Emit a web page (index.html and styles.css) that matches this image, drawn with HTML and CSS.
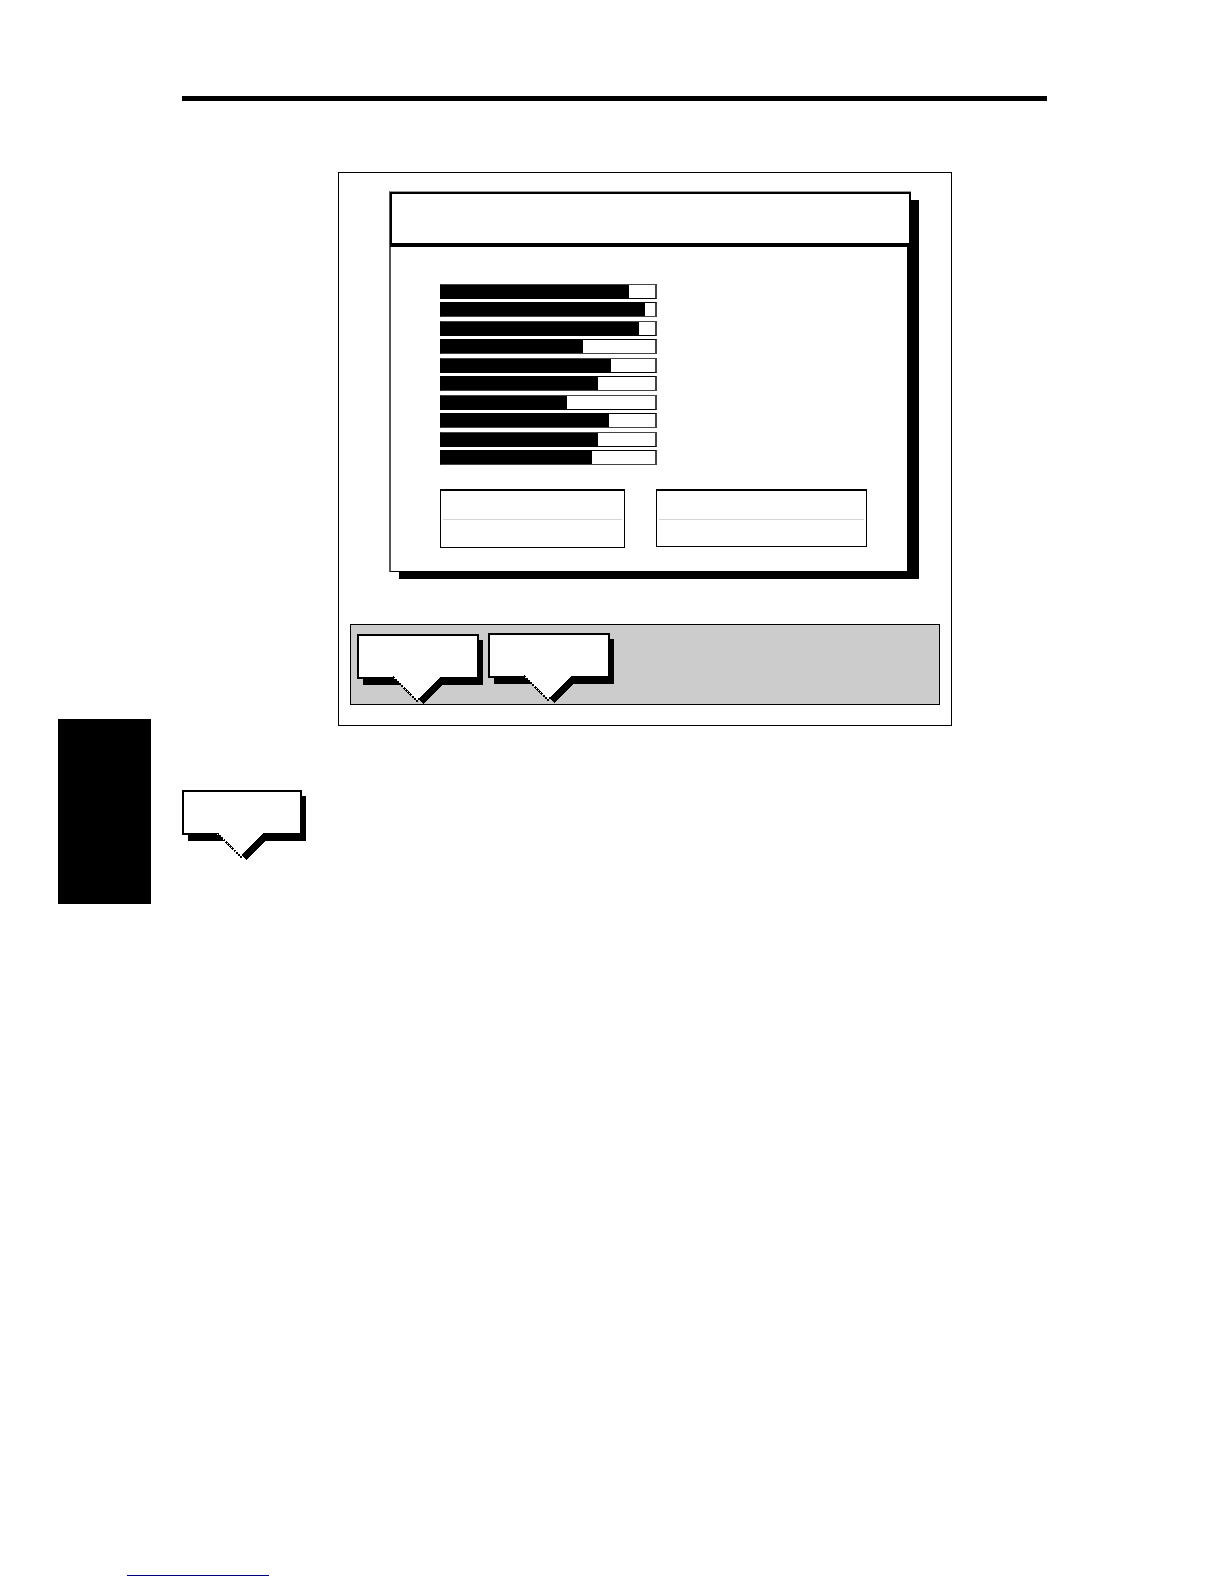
FILE: index.html
```html
<!DOCTYPE html>
<html lang="en">
<head>
  <meta charset="UTF-8">
  <meta name="viewport" content="width=device-width, initial-scale=1.0">
  <title>Manual page</title>
  <link rel="stylesheet" href="styles.css">
</head>
<body>
  <!-- callout shape, shared by the toolbar and the body text -->
  <svg class="defs" aria-hidden="true">
    <symbol id="callout" viewBox="0 0 126 71" preserveAspectRatio="none">
      <path d="M6 6H126V51H85L66 70L60 64L42 51H6Z" fill="#000"/>
      <path d="M0 0H122V45H0Z" fill="#000"/>
      <path d="M36 43L60 67L42 67L34 51Z" fill="var(--behind)"/>
      <path d="M6 45H38L44 51H6Z" fill="#000"/>
      <path d="M2 2H120V43H83L59 67L35 43H2Z" fill="#fff"/>
      <path d="M36 43L60 67L62 65" fill="none" stroke="#000" stroke-width="2" stroke-dasharray="2 1"/>
    </symbol>
  </svg>

  <div class="page">
    <div class="side-tab"></div>
    <main class="content">
      <hr class="rule">
      <section class="figure">
        <div class="window">
          <div class="window-header"></div>
          <div class="window-body">
            <div class="bars">
              <div class="bar"><div class="fill" style="width: 87.9%"></div></div>
              <div class="bar"><div class="fill" style="width: 95.1%"></div></div>
              <div class="bar"><div class="fill" style="width: 92.3%"></div></div>
              <div class="bar"><div class="fill" style="width: 66.2%"></div></div>
              <div class="bar"><div class="fill" style="width: 79.3%"></div></div>
              <div class="bar"><div class="fill" style="width: 73.2%"></div></div>
              <div class="bar"><div class="fill" style="width: 59.1%"></div></div>
              <div class="bar"><div class="fill" style="width: 78.4%"></div></div>
              <div class="bar"><div class="fill" style="width: 73.2%"></div></div>
              <div class="bar"><div class="fill" style="width: 70.4%"></div></div>
            </div>
            <div class="boxes">
              <div class="box"><div class="box-row"></div></div>
              <div class="box box-wide"><div class="box-row"></div></div>
            </div>
          </div>
        </div>
        <div class="toolbar">
          <svg class="callout" aria-hidden="true"><use href="#callout"/></svg>
          <svg class="callout callout-raised" aria-hidden="true"><use href="#callout"/></svg>
        </div>
      </section>
      <svg class="callout callout-note" aria-hidden="true"><use href="#callout"/></svg>
    </main>
    <footer class="footer">
      <a class="footer-link" href="#"></a>
    </footer>
  </div>
</body>
</html>
```

FILE: styles.css
```css
* {
  box-sizing: border-box;
}
body {
  margin: 0;
  background-color: #fff;
  color: #000;
  font-family: "Liberation Sans", Arial, sans-serif;
}
.defs {
  display: none;
}
.page {
  display: grid;
  grid-template-columns: 93px minmax(0, 1fr);
  grid-template-rows: 1fr auto;
  column-gap: 31px;
  min-height: 100vh;
  padding: 0 177px 8px 58px;
}
.side-tab {
  height: 185px;
  margin-top: 719px;
  background-color: #000;
}
.content {
  padding-top: 96px;
}
.rule {
  height: 5px;
  margin: 0 0 71px;
  border: none;
  background-color: #000;
}
.figure {
  max-width: 614px;
  margin-left: 156px;
  padding: 18px 11px 20px;
  border: 1px solid #000;
}
/* window with a hard drop shadow */
.window {
  margin: 0 29px 52px 39px;
  border-top: 1px solid #999;
  border-left: 1px solid #555;
  box-shadow: 9px 8px 0 -1px #000;
}
.window-header {
  height: 55px;
  border: 2px solid #000;
  border-bottom-width: 4px;
}
.window-body {
  padding: 37px 40px 23px 49px;
  border-left: 1px solid #555;
  border-right: 4px solid #000;
  border-bottom: 1px solid #000;
  background-color: #fff;
}
.bars {
  display: flex;
  flex-direction: column;
  gap: 3px;
  max-width: 217px;
}
.bar {
  height: 15px;
  border: 1px solid #000;
  border-right: 2px solid #444;
}
.bar:nth-child(odd) {
  border-top-color: #444;
}
.bar:nth-child(even) {
  margin-bottom: 1px;
  border-bottom-color: #444;
}
.fill {
  height: 100%;
  background-color: #000;
}
.boxes {
  display: flex;
  gap: 31px;
  margin-top: 23px;
}
.box {
  flex: 185 1 0;
  height: 59px;
  padding: 0 2px;
  border: 1px solid #000;
  border-top-width: 2px;
}
.box-wide {
  flex-grow: 211;
  height: 58px;
}
.box-row {
  height: 29px;
  border-bottom: 1px solid #d5d5d5;
}
.toolbar {
  --behind: #ccc;
  display: flex;
  gap: 5px;
  height: 81px;
  padding: 9px 6px;
  border: 1px solid #000;
  background-color: #ccc;
}
.callout {
  display: block;
  flex: none;
  width: 126px;
  height: 71px;
  shape-rendering: crispEdges;
}
.callout-raised {
  margin-top: -1px;
}
.callout-note {
  --behind: #fff;
  width: 124px;
  margin-top: 64px;
}
.footer {
  grid-column: 1 / -1;
  padding-left: 69px;
}
.footer-link {
  display: block;
  max-width: 142px;
  border-bottom: 1px solid #000080;
}
```
